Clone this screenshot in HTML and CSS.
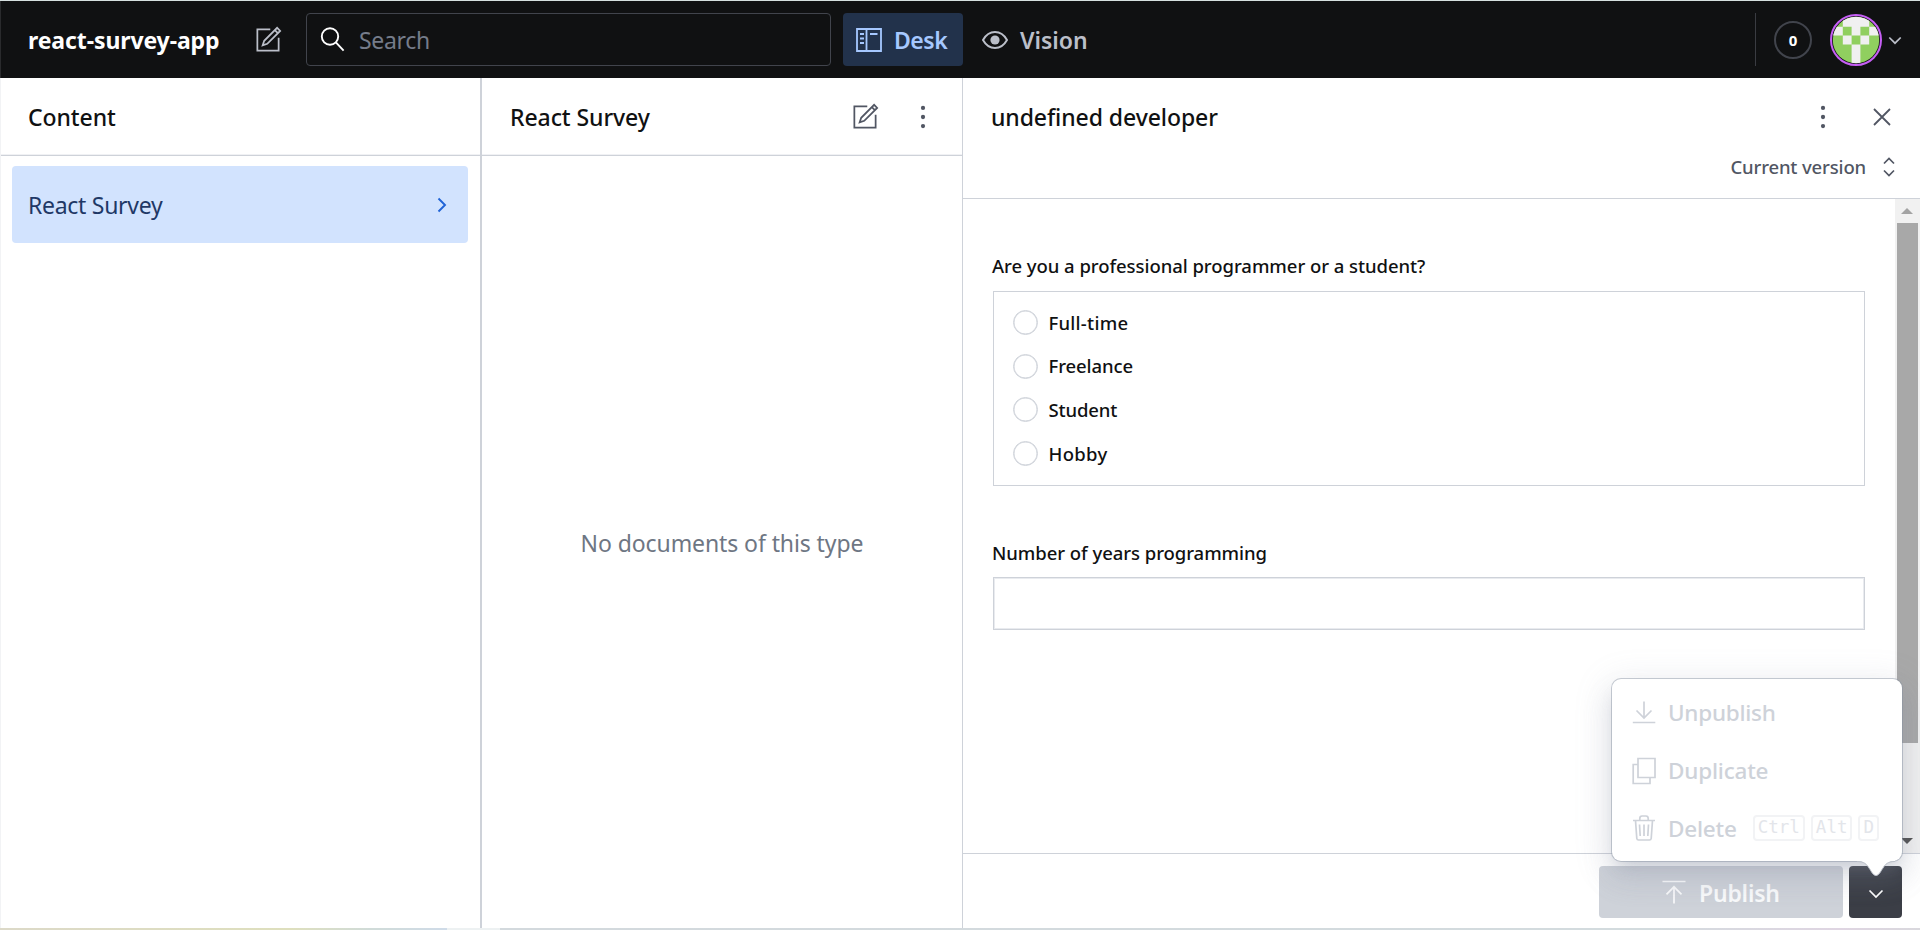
FILE: index.html
```html
<!DOCTYPE html>
<html lang="en">
<head>
<meta charset="utf-8">
<title>react-survey-app – Desk</title>
<link rel="stylesheet" href="styles.css">
</head>
<body>
<svg class="defs" width="0" height="0">
  <symbol id="compose" viewBox="0 0 25 25"><path d="M17 6L19 8M14 5.5H5.5V19.5H19.5V11M9 16L10 13L18.5 4.5L20.5 6.5L12 15L9 16Z"/></symbol>
  <symbol id="dots" viewBox="0 0 25 25"><g fill="currentColor" stroke="none"><circle cx="12.5" cy="6.5" r="1.4"/><circle cx="12.5" cy="12.5" r="1.4"/><circle cx="12.5" cy="18.5" r="1.4"/></g></symbol>
</svg>
<div class="app">
  <header class="navbar">
    <div class="brand">react-survey-app</div>
    <svg class="icon nav-compose"><use href="#compose"/></svg>
    <div class="search">
      <svg class="search-icon" viewBox="0 0 25 25"><circle cx="10" cy="9.5" r="8.2"/><path d="M15.9 15.4L23.6 23.6"/></svg>
      <span>Search</span>
    </div>
    <nav class="tools">
      <a class="tool active">
        <svg class="tool-icon desk-icon" viewBox="0 0 26 24"><path d="M1 1H25V23H1ZM10.5 1V23M4 6H8M4 10.5H8M4 15H8M14 6H21.5"/></svg>
        <span class="desk-label">Desk</span>
      </a>
      <a class="tool">
        <svg class="tool-icon eye-icon" viewBox="0 0 26 18"><path d="M1 9C3.5 4.5 7.5 1 13 1S22.500 4.500 25 9C22.500 13.500 18.500 17 13 17S3.500 13.500 1 9Z"/><circle cx="13" cy="9" r="4.600" fill="currentColor" stroke="none"/></svg>
        <span class="vision-label">Vision</span>
      </a>
    </nav>
    <div class="user">
      <div class="count">0</div>
      <svg class="avatar" viewBox="0 0 52 52">
        <defs><clipPath id="face"><circle cx="26" cy="26" r="23.200"/></clipPath></defs>
        <g clip-path="url(#face)">
          <rect width="52" height="52" fill="#90cf5f"/>
          <path fill="#f0f0f0" d="M12.800 0H39.200V12.800H12.800ZM0 12.800H12.800V21.600H0ZM21.600 12.800H30.400V21.600H21.600ZM39.200 12.800H52V21.600H39.200ZM12.800 21.600H21.600V30.400H12.800ZM30.400 21.600H39.200V30.400H30.400ZM21.600 30.400H30.400V52H21.600Z"/>
        </g>
        <circle cx="26" cy="26" r="25" fill="none" stroke="#c65ff5" stroke-width="2"/>
      </svg>
      <svg class="user-chevron" viewBox="0 0 14 9"><path d="M1.300 1.500L7 7.200L12.700 1.500"/></svg>
    </div>
  </header>

  <main class="panes">
    <section class="pane content-pane">
      <div class="pane-header"><h2>Content</h2></div>
      <a class="list-item">
        <span>React Survey</span>
        <svg viewBox="0 0 10 16"><path d="M1.500 1.500L8 8L1.500 14.500"/></svg>
      </a>
    </section>

    <section class="pane list-pane">
      <div class="pane-header">
        <h2>React Survey</h2>
        <svg class="icon"><use href="#compose"/></svg>
        <svg class="icon list-menu"><use href="#dots"/></svg>
      </div>
      <div class="empty">No documents of this type</div>
    </section>

    <section class="pane document-pane">
      <div class="document-header">
        <div class="title-row">
          <h2>undefined developer</h2>
          <svg class="icon"><use href="#dots"/></svg>
          <svg class="close" viewBox="0 0 18 18"><path d="M1 1L17 17M17 1L1 17"/></svg>
        </div>
        <div class="version-row">
          <span>Current version</span>
          <svg viewBox="0 0 12 20"><path d="M1 6.500L6 1.500L11 6.500M1 13.500L6 18.500L11 13.500"/></svg>
        </div>
      </div>
      <div class="document-body">
        <form class="form">
          <div class="label question">Are you a professional programmer or a student?</div>
          <div class="options">
            <div class="option"><i class="radio"></i><span class="full-time">Full-time</span></div>
            <div class="option"><i class="radio"></i><span>Freelance</span></div>
            <div class="option"><i class="radio"></i><span class="student">Student</span></div>
            <div class="option"><i class="radio"></i><span class="hobby">Hobby</span></div>
          </div>
          <div class="label years">Number of years programming</div>
          <div class="input"></div>
        </form>
        <div class="scrollbar">
          <svg viewBox="0 0 12 6"><path d="M0 6L6 0L12 6Z" fill="#a3a3a3"/></svg>
          <div class="thumb"></div>
          <svg viewBox="0 0 12 6"><path d="M0 0L6 6L12 0Z" fill="#505050"/></svg>
        </div>
      </div>
      <footer class="document-footer">
        <div class="publish">
          <svg viewBox="0 0 24 24"><path d="M.5 1.500H23.500M12 23.500V7M4.500 14.300L12 6.800L19.500 14.300"/></svg>
          <span>Publish</span>
        </div>
        <div class="more">
          <svg viewBox="0 0 16 10"><path d="M1.500 1.500L8 8L14.500 1.500"/></svg>
        </div>
        <div class="menu">
          <div class="menu-item">
            <svg viewBox="0 0 24 28"><path d="M12 2.500V19M4.500 11.500L12 19L19.500 11.500M.8 23.500H23.300"/></svg>
            <span class="unpublish">Unpublish</span>
          </div>
          <div class="menu-item">
            <svg viewBox="0 0 24 28"><path d="M6 1.500H23V20.500H6ZM6 7.500H1.200V26.500H18V20.500"/></svg>
            <span class="duplicate">Duplicate</span>
          </div>
          <div class="menu-item">
            <svg class="trash" viewBox="0 0 24 28"><path d="M1 6.500H23M3.500 6.500L4.800 24.500Q5 26 6.500 26H17.500Q19 26 19.200 24.500L20.500 6.500M7.800 6V4.500Q7.800 2 10 2H14Q16.200 2 16.200 4.500V6M7.500 10.500L8.200 22M12 10.500V22M16.500 10.500L15.800 22"/></svg>
            <span class="delete">Delete</span>
            <div class="keys"><kbd>Ctrl</kbd><kbd>Alt</kbd><kbd>D</kbd></div>
          </div>
          <svg class="menu-tip" viewBox="0 0 40 17"><path class="tip-fill" d="M0 0V1C7 1 9.500 4 12 8C14.500 11.500 16 15.500 19 15.500C22 15.500 23.500 11.500 26 8C28.500 4 31 1 38 1V0Z"/><path class="tip-edge" d="M0 1.500C7 1.500 9.500 4 12 8C14.500 11.500 16 15.500 19 15.500C22 15.500 23.500 11.500 26 8C28.500 4 31 1.500 38 1.500"/></svg>
        </div>
      </footer>
    </section>
  </main>
  <div class="strip"></div>
</div>
</body>
</html>
```
FILE: styles.css
```css
* { box-sizing: border-box; }
body {
  margin: 0;
  font-family: "Noto Sans", "Open Sans", sans-serif;
  font-size: 23px;
  line-height: 32px;
  color: #101112;
  background: #fff;
}
h2 { margin: 0; font-size: 23px; font-weight: 500; letter-spacing: -0.08px; flex: 1; }
svg { display: block; flex: none; fill: none; stroke: currentColor; stroke-width: 1.7; }
.defs { position: absolute; }
.icon { width: 38px; height: 38px; stroke-width: 1.15; }
.app {
  display: flex;
  flex-direction: column;
  width: 1920px;
  height: 930px;
  overflow: hidden;
  border-top: 1px solid #d6e0df;
}

/* Navbar */
.navbar {
  flex: none;
  display: flex;
  align-items: center;
  height: 77px;
  padding-left: 27px;
  background: #101112;
  border-left: 1px solid #2a2b2d;
}
.brand { width: 221px; font-weight: 700; letter-spacing: -0.1px; color: #fff; padding-top: 1px; white-space: nowrap; }
.nav-compose { color: #bbbfc9; }
.search {
  display: flex;
  align-items: center;
  width: 525px;
  height: 53px;
  margin-left: 19px;
  padding-left: 13px;
  border: 1px solid #41444c;
  border-radius: 4px;
  color: #757c8a;
  letter-spacing: -0.32px;
}
.search-icon { width: 25px; height: 25px; color: #fff; margin-right: 14px; stroke-width: 1.9; }
.search span { padding-top: 1px; }
.tools { display: flex; margin-left: 12px; }
.tool { display: flex; align-items: center; height: 53px; padding-left: 13px; border-radius: 4px; color: #bbbfc9; font-weight: 600; }
.tool span { padding-top: 1px; }
.tool.active { width: 120px; background: #22324b; color: #a6c8ff; }
.tool:not(.active) { padding-left: 19px; }
.tool-icon { width: 26px; margin-right: 12px; }
.desk-icon { height: 24px; stroke-width: 1.8; margin-right: 12px; }
.eye-icon { height: 18px; stroke-width: 2; }
.desk-label { letter-spacing: -0.5px; }
.vision-label { letter-spacing: 0; }
.user { display: flex; align-items: center; margin-left: auto; padding-right: 18px; height: 53px; border-left: 1px solid #3a3c42; }
.count {
  width: 38px;
  height: 38px;
  margin: 0 18px;
  border: 2px solid #41444c;
  border-radius: 50%;
  color: #fff;
  font-size: 15px;
  font-weight: 700;
  line-height: 34px;
  text-align: center;
}
.avatar { width: 52px; height: 52px; stroke: none; }
.user-chevron { width: 14px; height: 9px; margin: 2px 0 0 6px; color: #bbbfc9; }

/* Panes */
.panes { flex: 1; min-height: 0; display: grid; grid-template-columns: 482px 481px 957px; border-left: 1px solid #f2f3f5; margin-right: -1px; }
.pane { min-width: 0; min-height: 0; display: flex; flex-direction: column; }
.content-pane { border-right: 2px solid #ced2d9; margin-right: 1px; }
.list-pane { border-right: 1px solid #ced2d9; margin: 0 1px 0 -1px; }
.pane-header { display: flex; align-items: center; height: 78px; padding: 0 0 0 27px; border-bottom: 1px solid #ced2d9; box-shadow: inset 0 -1px #f0f1f4; }
.list-pane .pane-header { padding: 0 20px 0 28px; }
.icon { color: #515663; }
.nav-compose.icon { color: #bbbfc9; }
.list-menu { margin-left: 20px; }
.list-item {
  display: flex;
  align-items: center;
  justify-content: space-between;
  height: 77px;
  margin: 10px 12px 0 11px;
  padding: 1px 21px 0 16px;
  border-radius: 4px;
  background: #d2e3fe;
  color: #1f3866;
  letter-spacing: -0.28px;
}
.list-item svg { width: 10px; height: 16px; color: #1f63d6; stroke-width: 1.9; }
.empty { flex: 1; display: flex; align-items: center; justify-content: center; color: #6e7683; letter-spacing: -0.09px; padding-top: 2px; }

/* Document */
.document-pane { margin-left: -1px; }
.document-header { height: 121px; border-bottom: 1px solid #ced2d9; padding-left: 28px; }
.title-row { display: flex; align-items: center; height: 77px; padding-right: 30px; }
.close { width: 18px; height: 18px; margin-left: 31px; color: #515663; stroke-width: 1.8; }
.version-row { display: flex; align-items: center; justify-content: flex-end; gap: 17px; height: 24px; padding-right: 26px; color: #515663; font-size: 18.5px; font-weight: 500; letter-spacing: -0.15px; }
.version-row svg { width: 12px; height: 20px; }
.document-body { flex: 1; min-height: 0; display: flex; }
.form { flex: 1; padding: 54px 30px 0 30px; font-size: 18.5px; font-weight: 500; line-height: 26px; }
.label { margin-left: -1px; height: 26px; letter-spacing: -0.05px; }
.options { display: flex; flex-direction: column; height: 195px; margin: 12px 0 54px; padding: 9px 0 0 19px; border: 1px solid #ced2d9; }
.option { display: flex; align-items: center; gap: 10.500px; height: 43.600px; letter-spacing: -0.1px; }
.radio { width: 25px; height: 25px; border: 1.500px solid #ced2d9; border-radius: 50%; box-shadow: inset 0 0 0 .5px #ced2d9; }
.full-time { letter-spacing: 0.25px; }
.student { letter-spacing: -0.15px; }
.hobby { letter-spacing: 0.3px; }
.input { height: 53px; margin-top: 11px; border: 1px solid #ced2d9; box-shadow: inset 0 0 0 1px #e9ebef; }
.scrollbar { width: 26px; padding: 9px 2px 9px 0; background: #f1f1f1; display: flex; flex-direction: column; align-items: center; }
.scrollbar svg { width: 12px; height: 6px; stroke: none; }
.thumb { width: 21px; height: 520px; margin: 9px 0 auto; background: #a8a8a8; }

/* Footer actions */
.document-footer { position: relative; flex: none; display: flex; justify-content: flex-end; gap: 6px; height: 75px; padding: 12px 19px 0 0; border-top: 1px solid #ced2d9; }
.publish { display: flex; align-items: center; width: 244px; height: 52px; padding-left: 63px; border-radius: 4px; background: #ced2d9; color: #f9fafb; font-weight: 600; letter-spacing: -0.2px; }
.publish svg { width: 24px; height: 24px; margin-right: 13px; }
.publish span { padding-top: 2px; }
.more { display: flex; align-items: center; justify-content: center; width: 53px; height: 52px; padding-top: 3px; border-radius: 4px; background: #3b3e46; color: #fff; }
.more svg { width: 16px; height: 10px; }
.menu {
  position: absolute;
  right: 19px;
  bottom: 67px;
  width: 290px;
  height: 182px;
  padding: 5px 0 3px 20px;
  border-radius: 9px;
  background: #fff;
  box-shadow: 0 0 0 1px rgba(134, 144, 160, .45), 0 10px 15px -7px rgba(134, 144, 160, .35), 0 18px 28px 3px rgba(134, 144, 160, .14), 0 7px 34px 6px rgba(134, 144, 160, .14);
}
.menu-item { display: flex; align-items: center; height: 58.200px; color: #ced2d9; font-size: 22.500px; font-weight: 500; }
.menu-item svg { width: 24px; height: 28px; margin-right: 12px; }
.menu-item .trash { margin-top: -2px; }
.unpublish { letter-spacing: -0.25px; }
.duplicate { letter-spacing: -0.2px; }
.delete { letter-spacing: -0.2px; }
.keys { display: flex; gap: 6px; margin: -2px 0 0 16px; }
kbd { height: 26px; padding: 0 3px; border: 2px solid #f2f3f5; border-radius: 4px; font: 400 17.500px/21px "DejaVu Sans Mono", monospace; color: #e3e5ea; }
.menu .menu-tip { position: absolute; right: 4px; bottom: -16px; width: 42px; height: 17px; stroke: none; }
.tip-fill { fill: #fff; }
.tip-edge { stroke: #bcc1ca; stroke-width: 1; }
.strip { flex: none; height: 2px; background: linear-gradient(90deg, #dcd9c8 0, #dedfbd 290px, #d0dbd8 370px, #cfdbe8 447px, #edf1f2 447px, #edf1f2 500px, #d3d9dd 500px, #d3dbde 1650px, #dfd5e2 1840px, #d9d8dd 1920px); }
```
